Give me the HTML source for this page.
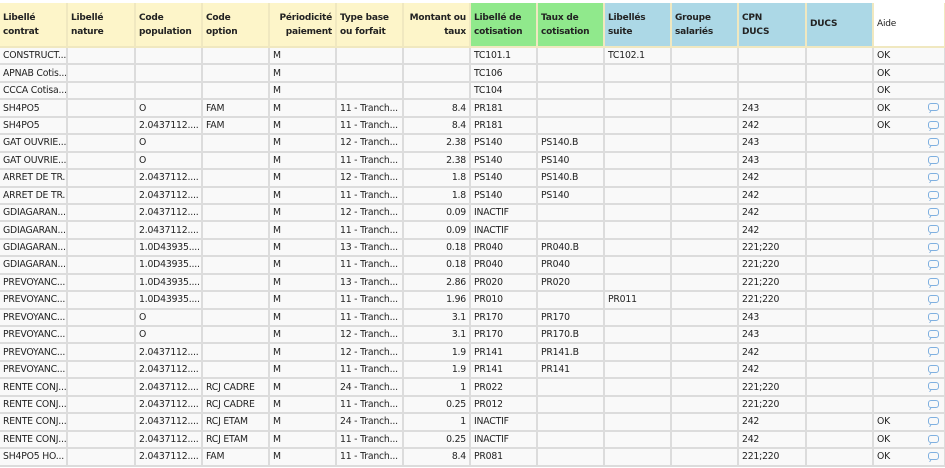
<!DOCTYPE html>
<html><head><meta charset="utf-8">
<style>
html,body{margin:0;padding:0;width:945px;height:468px;overflow:hidden;background:#fff;font-family:"DejaVu Sans","Liberation Sans",sans-serif;font-size:9.3px;color:#222;}
table{position:absolute;left:0;top:3px;border-collapse:collapse;table-layout:fixed;width:945px;}
td{border:1px solid #dcdcdc;border-width:0 2px 2px 0;padding:0 0 0 3px;white-space:nowrap;overflow:hidden;height:15.45px;background:#f9f9f9;position:relative;letter-spacing:-0.2px}
tr.h td{height:34px;vertical-align:top;padding-top:9px;line-height:13.5px;font-weight:bold;font-size:9px;border-color:#f0e8c0}
.y{background:#fdf5c9!important}.g{background:#90e98c!important}.b{background:#acd8e6!important}.w{background:#fff!important}
.r{text-align:right;padding-right:3px}
.i{position:absolute;right:5px;top:3px;width:9px;height:6px;border:1.3px solid #7fb0e0;border-radius:3px;}
.i:after{content:"";position:absolute;left:1px;bottom:-3px;width:3px;height:3px;border-left:1.3px solid #7fb0e0;transform:skewX(-30deg)}
</style></head><body>
<table>
<colgroup><col style="width:67px"><col style="width:68px"><col style="width:67px"><col style="width:67px"><col style="width:67px"><col style="width:67px"><col style="width:67px"><col style="width:67px"><col style="width:67px"><col style="width:67px"><col style="width:67px"><col style="width:68px"><col style="width:67px"><col style="width:72px"></colgroup>
<tr class="h"><td class="y">Libellé<br>contrat</td><td class="y">Libellé<br>nature</td><td class="y">Code<br>population</td><td class="y">Code<br>option</td><td class="y r">Périodicité<br>paiement</td><td class="y">Type base<br>ou forfait</td><td class="y r">Montant ou<br>taux</td><td class="g">Libellé de<br>cotisation</td><td class="g">Taux de<br>cotisation</td><td class="b">Libellés<br>suite</td><td class="b">Groupe<br>salariés</td><td class="b">CPN<br>DUCS</td><td class="b" style="padding-top:15px;height:28px">DUCS</td><td class="w" style="font-weight:normal;padding-top:15px;height:28px">Aide</td></tr>
<tr><td>CONSTRUCT...</td><td></td><td></td><td></td><td>M</td><td></td><td class="r"></td><td>TC101.1</td><td></td><td>TC102.1</td><td></td><td></td><td></td><td>OK</td></tr>
<tr><td>APNAB Cotis...</td><td></td><td></td><td></td><td>M</td><td></td><td class="r"></td><td>TC106</td><td></td><td></td><td></td><td></td><td></td><td>OK</td></tr>
<tr><td>CCCA Cotisa...</td><td></td><td></td><td></td><td>M</td><td></td><td class="r"></td><td>TC104</td><td></td><td></td><td></td><td></td><td></td><td>OK</td></tr>
<tr><td>SH4PO5</td><td></td><td>O</td><td>FAM</td><td>M</td><td>11 - Tranch...</td><td class="r">8.4</td><td>PR181</td><td></td><td></td><td></td><td>243</td><td></td><td>OK<span class="i"></span></td></tr>
<tr><td>SH4PO5</td><td></td><td>2.0437112....</td><td>FAM</td><td>M</td><td>11 - Tranch...</td><td class="r">8.4</td><td>PR181</td><td></td><td></td><td></td><td>242</td><td></td><td>OK<span class="i"></span></td></tr>
<tr><td>GAT OUVRIE...</td><td></td><td>O</td><td></td><td>M</td><td>12 - Tranch...</td><td class="r">2.38</td><td>PS140</td><td>PS140.B</td><td></td><td></td><td>243</td><td></td><td><span class="i"></span></td></tr>
<tr><td>GAT OUVRIE...</td><td></td><td>O</td><td></td><td>M</td><td>11 - Tranch...</td><td class="r">2.38</td><td>PS140</td><td>PS140</td><td></td><td></td><td>243</td><td></td><td><span class="i"></span></td></tr>
<tr><td>ARRET DE TR...</td><td></td><td>2.0437112....</td><td></td><td>M</td><td>12 - Tranch...</td><td class="r">1.8</td><td>PS140</td><td>PS140.B</td><td></td><td></td><td>242</td><td></td><td><span class="i"></span></td></tr>
<tr><td>ARRET DE TR...</td><td></td><td>2.0437112....</td><td></td><td>M</td><td>11 - Tranch...</td><td class="r">1.8</td><td>PS140</td><td>PS140</td><td></td><td></td><td>242</td><td></td><td><span class="i"></span></td></tr>
<tr><td>GDIAGARAN...</td><td></td><td>2.0437112....</td><td></td><td>M</td><td>12 - Tranch...</td><td class="r">0.09</td><td>INACTIF</td><td></td><td></td><td></td><td>242</td><td></td><td><span class="i"></span></td></tr>
<tr><td>GDIAGARAN...</td><td></td><td>2.0437112....</td><td></td><td>M</td><td>11 - Tranch...</td><td class="r">0.09</td><td>INACTIF</td><td></td><td></td><td></td><td>242</td><td></td><td><span class="i"></span></td></tr>
<tr><td>GDIAGARAN...</td><td></td><td>1.0D43935....</td><td></td><td>M</td><td>13 - Tranch...</td><td class="r">0.18</td><td>PR040</td><td>PR040.B</td><td></td><td></td><td>221;220</td><td></td><td><span class="i"></span></td></tr>
<tr><td>GDIAGARAN...</td><td></td><td>1.0D43935....</td><td></td><td>M</td><td>11 - Tranch...</td><td class="r">0.18</td><td>PR040</td><td>PR040</td><td></td><td></td><td>221;220</td><td></td><td><span class="i"></span></td></tr>
<tr><td>PREVOYANC...</td><td></td><td>1.0D43935....</td><td></td><td>M</td><td>13 - Tranch...</td><td class="r">2.86</td><td>PR020</td><td>PR020</td><td></td><td></td><td>221;220</td><td></td><td><span class="i"></span></td></tr>
<tr><td>PREVOYANC...</td><td></td><td>1.0D43935....</td><td></td><td>M</td><td>11 - Tranch...</td><td class="r">1.96</td><td>PR010</td><td></td><td>PR011</td><td></td><td>221;220</td><td></td><td><span class="i"></span></td></tr>
<tr><td>PREVOYANC...</td><td></td><td>O</td><td></td><td>M</td><td>11 - Tranch...</td><td class="r">3.1</td><td>PR170</td><td>PR170</td><td></td><td></td><td>243</td><td></td><td><span class="i"></span></td></tr>
<tr><td>PREVOYANC...</td><td></td><td>O</td><td></td><td>M</td><td>12 - Tranch...</td><td class="r">3.1</td><td>PR170</td><td>PR170.B</td><td></td><td></td><td>243</td><td></td><td><span class="i"></span></td></tr>
<tr><td>PREVOYANC...</td><td></td><td>2.0437112....</td><td></td><td>M</td><td>12 - Tranch...</td><td class="r">1.9</td><td>PR141</td><td>PR141.B</td><td></td><td></td><td>242</td><td></td><td><span class="i"></span></td></tr>
<tr><td>PREVOYANC...</td><td></td><td>2.0437112....</td><td></td><td>M</td><td>11 - Tranch...</td><td class="r">1.9</td><td>PR141</td><td>PR141</td><td></td><td></td><td>242</td><td></td><td><span class="i"></span></td></tr>
<tr><td>RENTE CONJ...</td><td></td><td>2.0437112....</td><td>RCJ CADRE</td><td>M</td><td>24 - Tranch...</td><td class="r">1</td><td>PR022</td><td></td><td></td><td></td><td>221;220</td><td></td><td><span class="i"></span></td></tr>
<tr><td>RENTE CONJ...</td><td></td><td>2.0437112....</td><td>RCJ CADRE</td><td>M</td><td>11 - Tranch...</td><td class="r">0.25</td><td>PR012</td><td></td><td></td><td></td><td>221;220</td><td></td><td><span class="i"></span></td></tr>
<tr><td>RENTE CONJ...</td><td></td><td>2.0437112....</td><td>RCJ ETAM</td><td>M</td><td>24 - Tranch...</td><td class="r">1</td><td>INACTIF</td><td></td><td></td><td></td><td>242</td><td></td><td>OK<span class="i"></span></td></tr>
<tr><td>RENTE CONJ...</td><td></td><td>2.0437112....</td><td>RCJ ETAM</td><td>M</td><td>11 - Tranch...</td><td class="r">0.25</td><td>INACTIF</td><td></td><td></td><td></td><td>242</td><td></td><td>OK<span class="i"></span></td></tr>
<tr><td>SH4PO5 HO...</td><td></td><td>2.0437112....</td><td>FAM</td><td>M</td><td>11 - Tranch...</td><td class="r">8.4</td><td>PR081</td><td></td><td></td><td></td><td>221;220</td><td></td><td>OK<span class="i"></span></td></tr>
</table>
</body></html>
